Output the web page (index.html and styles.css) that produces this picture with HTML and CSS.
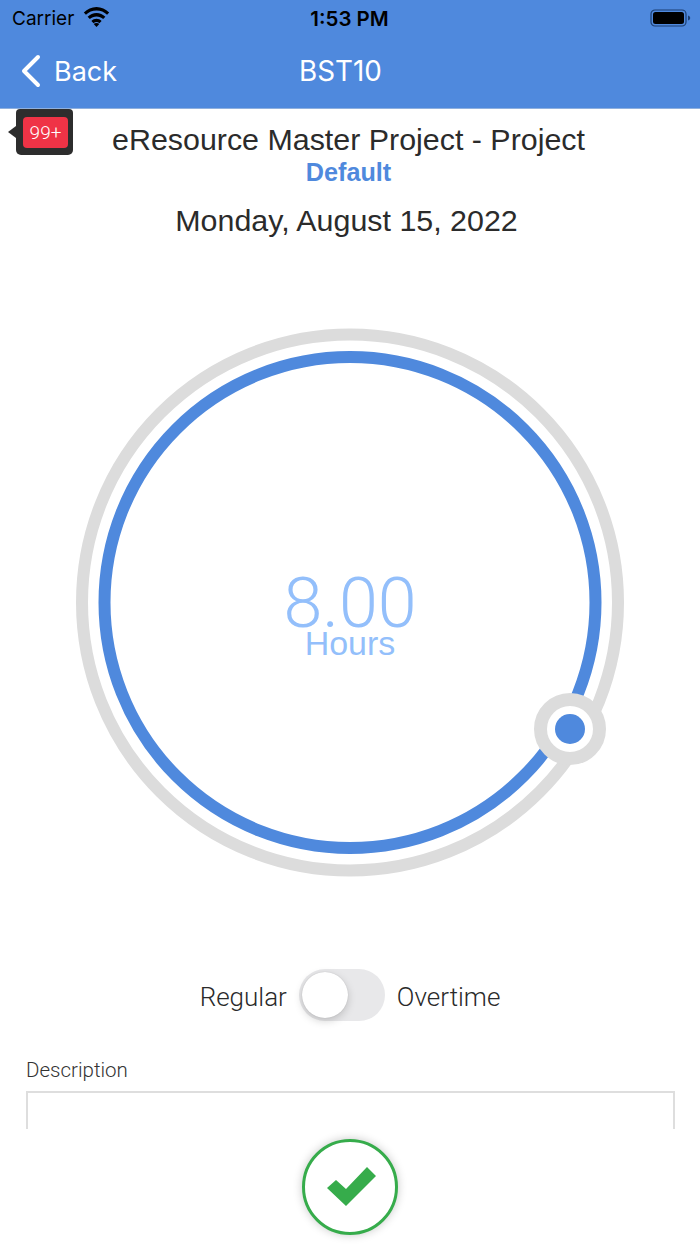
FILE: index.html
```html
<!DOCTYPE html>
<html lang="en">
<head>
<meta charset="utf-8">
<title>BST10</title>
<link rel="stylesheet" href="styles.css">
</head>
<body>
<div class="app">
  <header class="header">
    <div class="status">
      <div class="status-left">
        <span class="carrier">Carrier</span>
        <svg class="wifi" width="29" height="20" viewBox="0 0 26 18"><path d="M13 3.2c3.7 0 7 1.400 9.500 3.800l1.900-2.100C21.300 2 17.300 0 13 0S4.700 2 1.600 4.900l1.900 2.100C6 4.600 9.300 3.200 13 3.200z"/><path d="M13 8.500c2.300 0 4.400.9 6 2.400l2-2.100C18.800 6.700 16 5.400 13 5.400s-5.800 1.300-8 3.400l2 2.100c1.600-1.500 3.700-2.400 6-2.400z"/><path d="M13 13.600c1 0 1.900.4 2.600 1l2-2.100c-1.200-1.100-2.900-1.900-4.600-1.900s-3.400.8-4.600 1.900l2 2.100c.7-.6 1.600-1 2.600-1z"/><path d="M13 18l2.500-2.600c-.6-.6-1.500-.9-2.500-.9s-1.900.3-2.500.9z"/></svg>
      </div>
      <span class="time">1:53 PM</span>
      <svg class="battery" width="42" height="20" viewBox="0 0 42 20"><rect x="1" y="2" width="35" height="16" rx="4" fill="none" stroke="#1d3f72" stroke-width="1.200"/><rect x="3" y="4" width="31" height="12" rx="2.500" fill="#000"/><path d="M38 7.500c1.500.4 2.200 1.300 2.200 2.500s-.7 2.100-2.200 2.500z" fill="#1d3f72"/></svg>
    </div>
    <nav class="nav">
      <div class="back">
        <svg class="chevron" width="22" height="34" viewBox="0 0 22 34"><path d="M18 3 4 17l14 14" fill="none" stroke="#fff" stroke-width="4" stroke-linecap="round" stroke-linejoin="round"/></svg>
        <span>Back</span>
      </div>
      <h1 class="nav-title">BST10</h1>
    </nav>
  </header>

  <main class="main">
    <div class="badge"><span class="badge-count">99+</span></div>
    <div class="project">eResource Master Project - Project</div>
    <div class="task">Default</div>
    <div class="date">Monday, August 15, 2022</div>

    <div class="gauge">
      <svg class="gauge-svg" width="560" height="560" viewBox="0 0 560 560">
        <circle class="ring-outer" cx="280" cy="280.500" r="268"/>
        <circle class="ring-inner" cx="280" cy="280.500" r="245.500"/>
        <circle class="handle" cx="500" cy="407" r="29.500"/>
        <circle class="handle-dot" cx="500" cy="407" r="15"/>
      </svg>
      <div class="gauge-label">
        <div class="gauge-value">8.00</div>
        <div class="gauge-unit">Hours</div>
      </div>
    </div>

    <div class="type-row">
      <span class="type-label">Regular</span>
      <div class="switch"><div class="knob"></div></div>
      <span class="type-label">Overtime</span>
    </div>

    <div class="desc">
      <div class="desc-label">Description</div>
      <div class="desc-box"></div>
    </div>
  </main>

  <footer class="footer">
    <button class="confirm" type="button" aria-label="Save">
      <svg width="52" height="40" viewBox="0 0 52 40"><path d="M3 21 12 13 22 22 43 0 52 9 22 39z" fill="#36ac4b"/></svg>
    </button>
  </footer>
</div>
</body>
</html>
```

FILE: styles.css
```css
* { box-sizing: border-box; }
html, body { margin: 0; padding: 0; background: #fff; }
.app {
  width: 700px;
  height: 1244px;
  display: flex;
  flex-direction: column;
  overflow: hidden;
  font-family: "Liberation Sans", Arial, sans-serif;
  color: #2b2b2b;
}
.header {
  height: 109px;
  flex: none;
  background: #4f89dd;
  border-bottom: 1px solid #8fb0de;
}
.status {
  height: 36px;
  padding: 0 8px 0 12px;
  display: flex;
  align-items: center;
  justify-content: space-between;
  font-family: Inter, "Liberation Sans", sans-serif;
  color: #000;
}
.status-left { width: 150px; display: flex; align-items: center; gap: 8px; }
.carrier { font-size: 19px; font-weight: 400; }
.wifi { margin-top: -2px; }
.time { font-size: 20.500px; font-weight: 600; margin-right: 113px; }
.nav {
  position: relative;
  height: 72px;
  color: #fff;
  font-family: Inter, "Liberation Sans", sans-serif;
}
.back {
  display: flex;
  align-items: center;
  gap: 12px;
  height: 70px;
  padding-left: 20px;
  font-size: 27px;
}
.nav-title {
  position: absolute;
  left: 0;
  top: 0;
  width: 681px;
  margin: 0;
  line-height: 70px;
  text-align: center;
  font-size: 27.800px;
  font-weight: 400;
}
.main { position: relative; flex: 1; min-height: 0; overflow: hidden; }
.badge {
  position: absolute;
  left: 16px;
  top: 0;
  width: 57px;
  height: 46px;
  background: #2d2d2d;
  border-radius: 4px 4px 5px 5px;
}
.badge::before {
  content: "";
  position: absolute;
  left: -8px;
  top: 17px;
  border: 6px solid transparent;
  border-left: 0;
  border-right: 8px solid #2d2d2d;
}
.badge-count {
  position: absolute;
  left: 7px;
  top: 8px;
  width: 45px;
  height: 31px;
  border-radius: 4px;
  background: #ef3346;
  color: #fff;
  font-family: Roboto, "Liberation Sans", sans-serif;
  font-weight: 300;
  font-size: 19px;
  line-height: 31px;
  text-align: center;
}
.project {
  margin-top: 13px;
  height: 36px;
  font-size: 30.400px;
  line-height: 34px;
  text-align: center;
  white-space: nowrap;
  padding-right: 3px;
}
.task {
  height: 30px;
  color: #4f89dd;
  font-size: 25.200px;
  font-weight: 700;
  line-height: 28px;
  text-align: center;
  padding-right: 3px;
}
.date {
  height: 45px;
  font-size: 30.400px;
  line-height: 36px;
  text-align: center;
  margin-top: 14px;
  padding-right: 7px;
}
.gauge {
  position: relative;
  width: 560px;
  height: 560px;
  margin: 75px auto 0;
}
.gauge-svg { display: block; }
.ring-outer { fill: none; stroke: #dcdcdc; stroke-width: 12px; }
.ring-inner { fill: none; stroke: #4f89dd; stroke-width: 12px; }
.handle { fill: #fff; stroke: #dcdcdc; stroke-width: 13px; }
.handle-dot { fill: #4f89dd; }
.gauge-label {
  position: absolute;
  left: 0;
  right: 0;
  top: 246px;
  text-align: center;
  color: #93bffb;
}
.gauge-value {
  font-family: Roboto, "Liberation Sans", sans-serif;
  font-weight: 300;
  font-size: 70px;
  line-height: 70px;
}
.gauge-unit { font-size: 34px; line-height: 36px; margin-top: -13px; }
.type-row {
  margin-top: 87px;
  height: 52px;
  display: flex;
  justify-content: center;
  align-items: center;
  gap: 12px;
  font-family: Roboto, "Liberation Sans", sans-serif;
}
.type-label { font-size: 26px; font-weight: 300; color: #2a2a2a; margin-top: 4px; }
.switch {
  width: 86px;
  height: 52px;
  padding: 3px;
  border-radius: 26px;
  background: #e8e8ea;
}
.knob {
  width: 46px;
  height: 46px;
  border-radius: 50%;
  background: #fff;
  box-shadow: 0 3px 8px rgba(0, 0, 0, .18), 0 0 1px rgba(0, 0, 0, .2);
}
.desc { margin-top: 37px; padding: 0 25px 0 26px; }
.desc-label {
  font-family: Roboto, "Liberation Sans", sans-serif;
  font-size: 20.500px;
  font-weight: 300;
  line-height: 24px;
  color: #333;
}
.desc-box {
  margin-top: 9px;
  height: 60px;
  border: 2px solid #dedede;
}
.footer {
  height: 115px;
  flex: none;
  background: #fff;
  display: flex;
  justify-content: center;
  padding-top: 10px;
}
.confirm {
  width: 96px;
  height: 96px;
  padding: 0;
  border: 3px solid #36ac4b;
  border-radius: 50%;
  background: #fff;
  box-shadow: 0 0 10px rgba(0, 0, 0, .22);
  display: flex;
  align-items: center;
  justify-content: center;
}
```
